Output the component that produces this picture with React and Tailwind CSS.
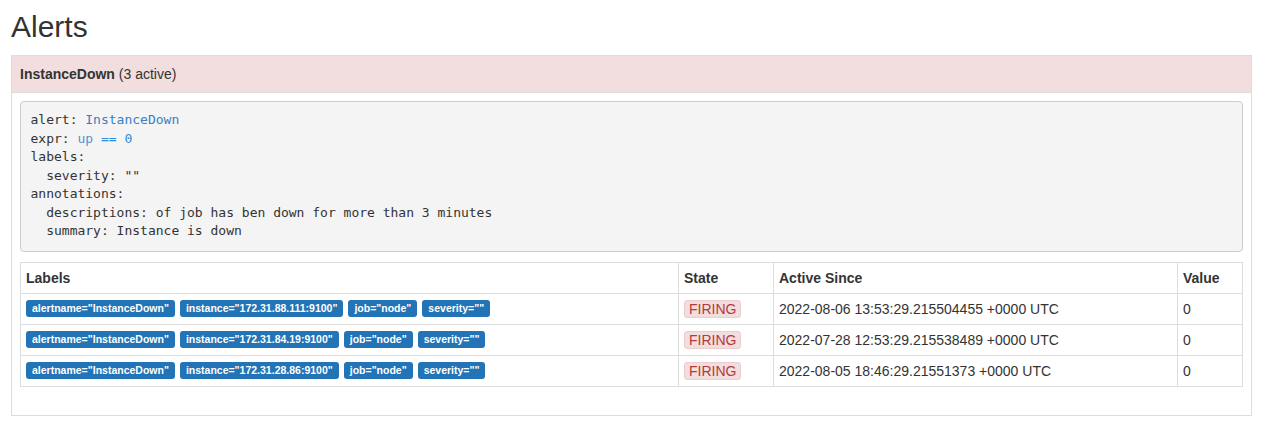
const ALERTS = [
  { instance: '172.31.88.111:9100', since: '2022-08-06 13:53:29.215504455 +0000 UTC' },
  { instance: '172.31.84.19:9100', since: '2022-07-28 12:53:29.215538489 +0000 UTC' },
  { instance: '172.31.28.86:9100', since: '2022-08-05 18:46:29.21551373 +0000 UTC' },
];

function Badge({ children }) {
  return (
    <span className="inline-block rounded-[3px] bg-[#2274b6] px-[6px] py-[2px] text-[10.5px] font-bold leading-[13px] text-white whitespace-nowrap">
      {children}
    </span>
  );
}

export default function App() {
  return (
    <div className="min-h-[435px] bg-white px-[11px] pr-[16px] text-[14px] text-[#333] font-['Liberation_Sans',Arial,sans-serif]">
      <h2 className="pt-[10px] mb-[12px] text-[30px] font-medium leading-[33px]">Alerts</h2>

      <div className="border border-[#ddd] bg-white">
        <div className="border-b border-[#ddd] bg-[#f2dede] px-[8px] py-[8px] leading-5">
          <strong>InstanceDown</strong> (3 active)
        </div>

        <div className="p-[8px]">
          <pre className="mb-[10px] rounded-[4px] border border-[#ccc] bg-[#f4f4f4] px-[9.5px] pt-[9px] pb-[10px] text-[13px] leading-[1.42857] text-[#333] font-['DejaVu_Sans_Mono',monospace]">
            {'alert: '}<span className="text-[#3b7fc0]">InstanceDown</span>{'\n'}
            {'expr: '}<span className="text-[#5b8fc7]">up</span> <span className="text-[#2e8bd8]">== 0</span>{'\n'}
            {'labels:\n'}
            {'  severity: ""\n'}
            {'annotations:\n'}
            {'  descriptions: of job has ben down for more than 3 minutes\n'}
            {'  summary: Instance is down'}
          </pre>

          <table className="mb-[20px] w-full table-fixed border-collapse border border-[#ddd]">
            <colgroup>
              <col className="w-[658px]" />
              <col className="w-[95px]" />
              <col className="w-[404px]" />
              <col />
            </colgroup>
            <thead>
              <tr className="text-left">
                <th className="border border-[#ddd] p-[5px] leading-5 font-bold">Labels</th>
                <th className="border border-[#ddd] p-[5px] leading-5 font-bold">State</th>
                <th className="border border-[#ddd] p-[5px] leading-5 font-bold">Active Since</th>
                <th className="border border-[#ddd] p-[5px] leading-5 font-bold">Value</th>
              </tr>
            </thead>
            <tbody>
              {ALERTS.map((a) => (
                <tr key={a.instance}>
                  <td className="border border-[#ddd] p-[5px]">
                    <div className="flex h-5 items-center gap-[5px]">
                      <Badge>alertname="InstanceDown"</Badge>
                      <Badge>instance="{a.instance}"</Badge>
                      <Badge>job="node"</Badge>
                      <Badge>severity=""</Badge>
                    </div>
                  </td>
                  <td className="border border-[#ddd] p-[5px]">
                    <div className="flex h-5 items-center">
                      <span className="rounded-[3px] border border-[#ebccd1] bg-[#f2dede] px-[4px] leading-4 text-[#b53a3a]">
                        FIRING
                      </span>
                    </div>
                  </td>
                  <td className="border border-[#ddd] p-[5px] leading-5">{a.since}</td>
                  <td className="border border-[#ddd] p-[5px] leading-5">0</td>
                </tr>
              ))}
            </tbody>
          </table>
        </div>
      </div>
    </div>
  );
}
